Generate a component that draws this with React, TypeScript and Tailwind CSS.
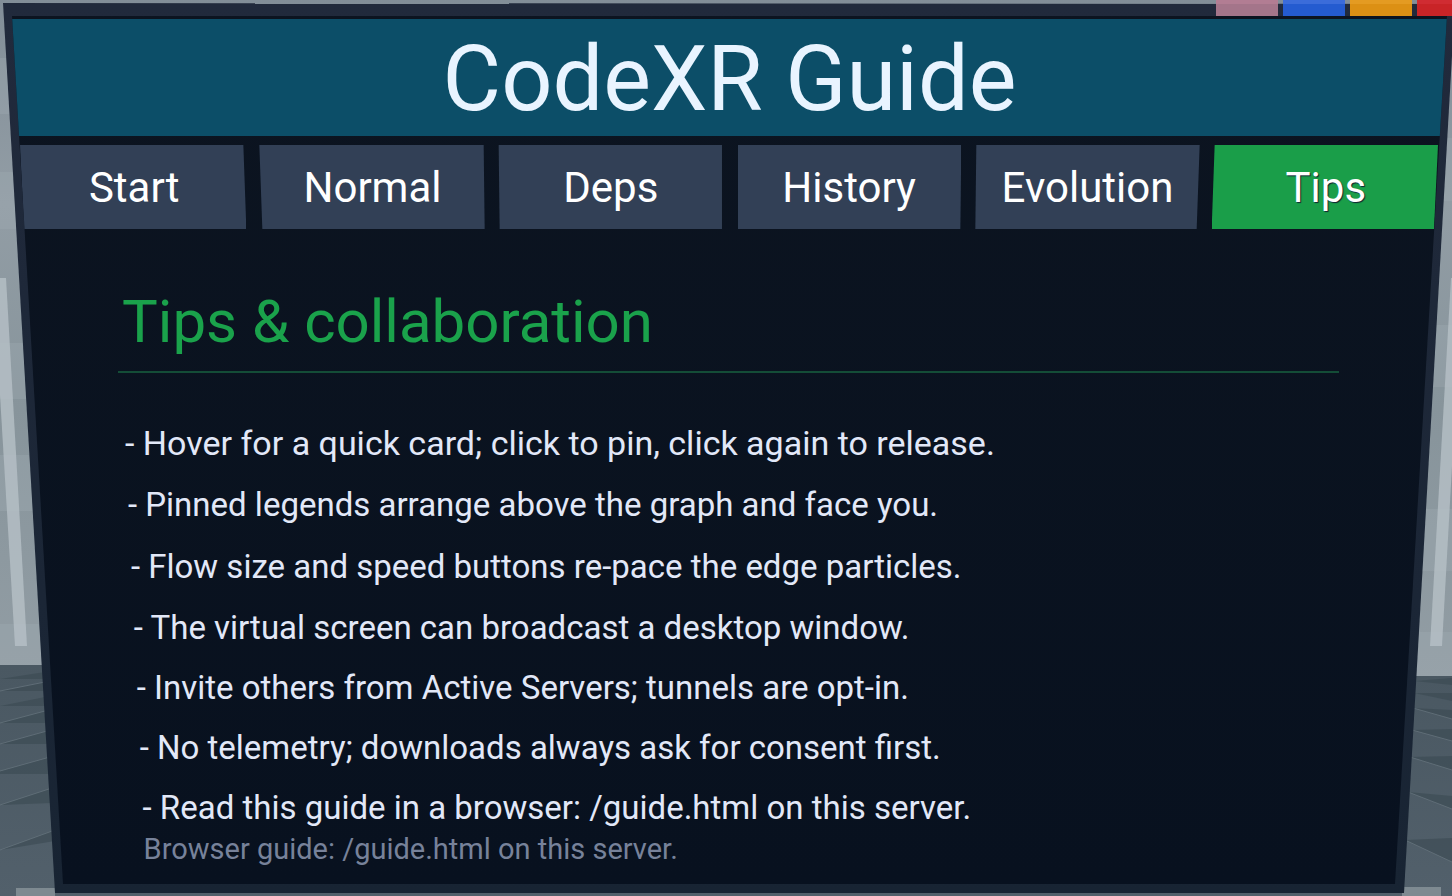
import React, { useState } from 'react';
import clsx from 'clsx';

interface Tab {
  id: string;
  label: string;
  shape: string;
}

// Each tab leans towards the middle of the panel
const TABS: Tab[] = [
  { id: 'start', label: 'Start', shape: '[clip-path:polygon(0_0,calc(100%-3px)_0,100%_100%,4px_100%)]' },
  { id: 'normal', label: 'Normal', shape: '[clip-path:polygon(1px_0,calc(100%-1px)_0,100%_100%,4px_100%)]' },
  { id: 'deps', label: 'Deps', shape: '[clip-path:polygon(2px_0,calc(100%-1px)_0,calc(100%-1px)_100%,3px_100%)]' },
  { id: 'history', label: 'History', shape: '[clip-path:polygon(3px_0,100%_0,calc(100%-1px)_100%,3px_100%)]' },
  { id: 'evolution', label: 'Evolution', shape: '[clip-path:polygon(3px_0,100%_0,calc(100%-3px)_100%,2px_100%)]' },
  { id: 'tips', label: 'Tips', shape: '[clip-path:polygon(3px_0,100%_0,calc(100%-4px)_100%,0_100%)]' },
];

const TIPS = [
  'Hover for a quick card; click to pin, click again to release.',
  'Pinned legends arrange above the graph and face you.',
  'Flow size and speed buttons re-pace the edge particles.',
  'The virtual screen can broadcast a desktop window.',
  'Invite others from Active Servers; tunnels are opt-in.',
  'No telemetry; downloads always ask for consent first.',
  'Read this guide in a browser: /guide.html on this server.',
];

const Scene: React.FC = () => (
  <svg className="absolute inset-0 h-full w-full" viewBox="0 0 1452 896" preserveAspectRatio="none" aria-hidden="true">
    <defs>
      <linearGradient id="wall" x1="0" y1="0" x2="0" y2="1">
        <stop offset="0" stopColor="#828e98" />
        <stop offset="0.3" stopColor="#929da5" />
        <stop offset="0.6" stopColor="#87949b" />
        <stop offset="1" stopColor="#929da4" />
      </linearGradient>
      <linearGradient id="floor" x1="0" y1="0" x2="0" y2="1">
        <stop offset="0" stopColor="#4a5862" />
        <stop offset="1" stopColor="#52606b" />
      </linearGradient>
    </defs>
    <rect width="1452" height="680" fill="url(#wall)" />
    {/* wall panels */}
    <g fill="#a3afb6" opacity="0.3">
      <rect x="0" y="58" width="60" height="56" />
      <rect x="0" y="172" width="60" height="57" />
      <rect x="0" y="343" width="60" height="56" />
      <rect x="0" y="455" width="60" height="56" />
      <rect x="0" y="624" width="60" height="41" />
      <rect x="1400" y="138" width="52" height="63" />
      <rect x="1400" y="325" width="52" height="62" />
      <rect x="1400" y="509" width="52" height="62" />
      <rect x="1400" y="632" width="52" height="44" />
    </g>
    {/* light pillars */}
    <path d="M0 278h6l21 368H15L0 395z" fill="#b6c1c7" opacity="0.8" />
    <path d="M1452 278h-1l-21 368h12l10-180z" fill="#b6c1c7" opacity="0.8" />
    {/* floor */}
    <path d="M0 665h726v231H0z" fill="url(#floor)" />
    <path d="M726 676h726v220H726z" fill="url(#floor)" />
    <g fill="#3a4951" opacity="0.6">
      <path d="M0 679l45-7v7zM0 691l45-9v9zM0 706l45-9v9zM0 723l45-12v12zM0 744l47-13v13zM0 771l50-14v17H0zM0 805l52-17v15zM0 850l55-20v11z" />
      <path d="M1414 681l38 4v-7zM1414 693l38 8v-8zM1413 708l39 11v-9zM1412 730l40 11v-12zM1410 757l42 13v-14zM1408 792l44 17v-13zM1405 840l47 22v-24z" />
    </g>
    <g stroke="#6b7983" fill="none" opacity="0.65">
      <path d="M0 691l45-9M0 723l45-12M0 744l47-13M0 771l50-14M0 805l52-17M0 850l55-20" />
      <path d="M1413 708l39 11M1412 730l40 11M1410 757l42 13M1408 792l44 17M1405 840l47 22" />
    </g>
    <path d="M16 888h39v8H16zM1402 887h39v9h-39z" fill="#7e8a91" />
  </svg>
);

const Swatches: React.FC = () => (
  <div className="absolute top-0 -right-[27px] flex h-4 gap-[5px]" aria-hidden="true">
    <div className="w-[62px] border-t-4 border-[#b27d93] bg-[#a4758a]" />
    <div className="w-[62px] border-t-4 border-[#3b6cda] bg-[#245bd0]" />
    <div className="w-[62px] border-t-4 border-[#e49b22] bg-[#dc9014]" />
    <div className="w-[62px] border-t-4 border-[#d02c32] bg-[#c92427]" />
  </div>
);

const TipsPage: React.FC = () => (
  <section className="mr-[108px] ml-[106px] pt-[52px]">
    <h2 className="border-b-2 border-[#144d37] pb-2 pl-1 text-[60px] leading-[82px] text-[#1aa24b]">Tips &amp; collaboration</h2>
    <div className="pt-[39px] pl-1">
      {/* left margin that follows the slanted edge of the panel */}
      <div className="float-left h-[456px] w-[22px] [shape-outside:polygon(0_0,100%_100%,0_100%)]" />
      {/* rows further down the panel are a little smaller and closer together */}
      <ul className="text-[33px] leading-[60px] text-[#e2e8f8]">
        {TIPS.map((tip) => (
          <li key={tip} className="first:text-[34px] nth-[-n+3]:leading-[62px]">- {tip}</li>
        ))}
      </ul>
      <p className="text-[29px] leading-[22px] text-[#77829a]">Browser guide: /guide.html on this server.</p>
    </div>
  </section>
);

const App: React.FC = () => {
  const [active, setActive] = useState('tips');

  return (
    <div className="relative min-h-screen overflow-hidden bg-[#88949c] font-['Roboto',sans-serif]">
      <Scene />
      <main className="relative flex min-h-screen flex-col bg-linear-to-b from-[#212a3c] to-[#182433] pt-4 pr-[5px] pb-3 pl-3 [clip-path:polygon(3px_3px,100%_4px,100%_56px,calc(100%-48px)_calc(100%-3px),55px_calc(100%-3px))]">
        <div className="flex-1 bg-linear-to-b from-[#0c1420] to-[#08111f] pt-[3px] [clip-path:polygon(0_0,100%_0,calc(100%-52px)_100%,51px_100%)]">
          <header className="flex h-[117px] items-center justify-center bg-[#0c4e68] pt-1">
            <h1 className="text-[90px] leading-none text-[#e9f4ff]">CodeXR Guide</h1>
          </header>
          <nav className="mr-[9px] ml-2 mt-[9px] grid grid-cols-6 gap-3">
            {TABS.map((tab) => (
              <button
                key={tab.id}
                type="button"
                onClick={() => setActive(tab.id)}
                className={clsx(
                  'h-[84px] pt-0.5 pl-0.5 text-center text-[42px] leading-none text-white',
                  tab.shape,
                  active === tab.id ? 'bg-[#1a9e49] [text-shadow:1px_1px_1px_#123]' : 'bg-[#324056]'
                )}
              >
                {tab.label}
              </button>
            ))}
          </nav>
          <TipsPage />
        </div>
      </main>
      <Swatches />
    </div>
  );
};

export default App;
